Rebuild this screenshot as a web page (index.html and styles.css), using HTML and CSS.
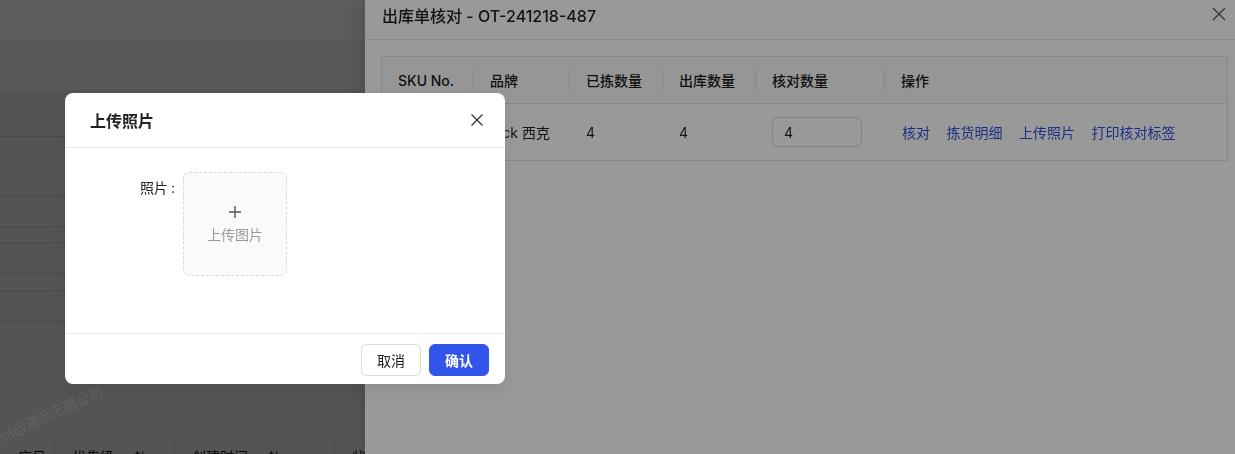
FILE: index.html
```html
<!DOCTYPE html>
<html lang="zh-CN">
<head>
    <meta charset="UTF-8">
    <title>出库单核对</title>
    <link rel="stylesheet" href="styles.css">
</head>
<body>
    <div class="page">
        <div class="topbar"></div>
        <div class="toolbar"></div>
        <div class="list">
            <div class="row" style="height: 47px"></div>
            <div class="row" style="height: 59px"></div>
            <div class="row" style="height: 31px"></div>
            <div class="row" style="height: 16px"></div>
            <div class="row" style="height: 31px"></div>
            <div class="row" style="height: 17px"></div>
            <div class="row" style="height: 31px"></div>
            <div class="gap"></div>
            <div class="list-head">
                <div class="lh-cell">序号 <span class="sort">⇅</span></div>
                <div class="lh-cell">优先级 <span class="sort">⇅</span></div>
                <div class="lh-cell">创建时间 <span class="sort">⇅</span></div>
                <div class="lh-cell">状态</div>
            </div>
        </div>
    </div>

    <div class="mask"></div>

    <aside class="drawer">
        <div class="drawer-header">
            <div class="drawer-title">出库单核对 - OT-241218-487</div>
            <svg class="drawer-close" width="14" height="14" viewBox="0 0 14 14">
                <path d="M1 1L13 13M13 1L1 13" stroke="#555" stroke-width="1.3" fill="none"/>
            </svg>
        </div>
        <div class="drawer-body">
            <div class="check-table">
                <div class="th">SKU No.</div>
                <div class="th divided">品牌</div>
                <div class="th divided">已拣数量</div>
                <div class="th divided">出库数量</div>
                <div class="th divided">核对数量</div>
                <div class="th divided">操作</div>

                <div class="td">SK-20931</div>
                <div class="td">Sick 西克</div>
                <div class="td">4</div>
                <div class="td">4</div>
                <div class="td"><input class="qty-input" value="4"></div>
                <div class="td actions">
                    <a href="#">核对</a>
                    <a href="#">拣货明细</a>
                    <a href="#">上传照片</a>
                    <a href="#">打印核对标签</a>
                </div>
            </div>
        </div>
    </aside>

    <div class="watermark">Robot@演示无限公司</div>

    <div class="mask"></div>

    <div class="modal">
        <div class="modal-header">
            <div class="modal-title">上传照片</div>
            <svg class="modal-close" width="12" height="12" viewBox="0 0 12 12">
                <path d="M0.5 0.5L11.5 11.5M11.5 0.5L0.5 11.5" stroke="#333" stroke-width="1.3" fill="none"/>
            </svg>
        </div>
        <div class="modal-body">
            <div class="form-item">
                <label class="form-label">照片<span class="colon">:</span></label>
                <div class="upload-box">
                    <svg width="12" height="12" viewBox="0 0 12 12">
                        <path d="M6 0V12M0 6H12" stroke="#555" stroke-width="1.4" fill="none"/>
                    </svg>
                    <div class="upload-text">上传图片</div>
                </div>
            </div>
        </div>
        <div class="modal-footer">
            <button class="btn">取消</button>
            <button class="btn btn-primary">确认</button>
        </div>
    </div>
</body>
</html>
```

FILE: styles.css
```css
* {
    box-sizing: border-box;
}

body {
    margin: 0;
    font-family: Inter, "Noto Sans CJK SC", sans-serif;
    font-size: 14px;
    color: rgba(0, 0, 0, 0.88);
    background: #fff;
    overflow: hidden;
}

/* page underneath */
.page {
    width: 1235px;
    height: 454px;
    overflow: hidden;
}

.topbar {
    height: 40px;
    background: #fff;
}

.toolbar {
    height: 50px;
    background: #f7f7f7;
}

.list {
    background: #ececec;
    height: 364px;
}

.row {
    border-bottom: 1px solid #cdcdcd;
}

.gap {
    height: 105px;
}

.list-head {
    display: grid;
    grid-template-columns: 54px 120px 160px 200px;
    padding-top: 19px;
}

.lh-cell {
    position: relative;
    padding-left: 18px;
    line-height: 22px;
    color: #111;
}

.lh-cell + .lh-cell::before {
    content: "";
    position: absolute;
    left: 0;
    top: -4px;
    height: 22px;
    width: 1px;
    background: #cdcdcd;
}

.sort {
    margin-left: 16px;
    font-size: 12px;
}

.mask {
    position: fixed;
    inset: 0;
    background: rgba(0, 0, 0, 0.4);
}

/* drawer */
.drawer {
    position: fixed;
    top: 0;
    right: 0;
    bottom: 0;
    width: 870px;
    background: #fff;
    box-shadow: -6px 0 16px rgba(0, 0, 0, 0.1);
}

.drawer-header {
    height: 40px;
    border-bottom: 1px solid #e6e6e6;
    display: flex;
    justify-content: space-between;
    padding: 4px 9px 0 17px;
}

.drawer-title {
    font-size: 16px;
    line-height: 24px;
    font-weight: 500;
}

.drawer-close {
    margin-top: 3px;
}

.drawer-body {
    padding: 16px 7px 0 16px;
}

.check-table {
    display: grid;
    grid-template-columns: 91px 96px 93px 93px 129px 1fr;
    border: 1px solid #e3e3e3;
}

.th {
    position: relative;
    height: 47px;
    background: #fafafa;
    border-bottom: 1px solid #e3e3e3;
    padding-left: 17px;
    display: flex;
    align-items: center;
    font-weight: 500;
    color: #1a1a1a;
}

.th:first-child {
    padding-left: 16px;
}

.th.divided::before {
    content: "";
    position: absolute;
    left: 0;
    top: 12px;
    height: 22px;
    width: 1px;
    background: #e3e3e3;
}

.td {
    height: 56px;
    padding-left: 17px;
    display: flex;
    align-items: center;
}

.qty-input {
    width: 90px;
    height: 30px;
    border: 1px solid #d9d9d9;
    border-radius: 6px;
    padding: 0 11px;
    font: inherit;
    color: inherit;
}

.actions {
    gap: 16.5px;
    padding-left: 18px;
}

.actions a {
    color: #2f4fe0;
    text-decoration: none;
}

.watermark {
    position: fixed;
    left: -19px;
    top: 438px;
    font-size: 14px;
    line-height: 16px;
    color: rgba(255, 255, 255, 0.18);
    transform: rotate(-24deg);
    transform-origin: left bottom;
    white-space: nowrap;
}

/* modal */
.modal {
    position: fixed;
    left: 65px;
    top: 93px;
    width: 440px;
    background: #fff;
    border-radius: 8px;
    box-shadow: 0 6px 16px rgba(0, 0, 0, 0.08);
}

.modal-header {
    height: 55px;
    padding: 0 22px 0 25px;
    border-bottom: 1px solid #ececec;
    display: flex;
    align-items: center;
    justify-content: space-between;
}

.modal-title {
    font-size: 16px;
    font-weight: 600;
    color: #222;
}

.modal-body {
    height: 185px;
    padding: 24px 24px 0;
}

.form-item {
    display: flex;
    align-items: flex-start;
}

.form-label {
    width: 94px;
    line-height: 32px;
    text-align: right;
    padding-right: 8px;
    color: #222;
}

.colon {
    margin-left: 3px;
}

.upload-box {
    width: 104px;
    height: 104px;
    border: 1px dashed #d9d9d9;
    border-radius: 6px;
    background: #fafafa;
    display: flex;
    flex-direction: column;
    align-items: center;
    justify-content: center;
    gap: 9px;
}

.upload-text {
    color: #999;
    line-height: 16px;
}

.modal-footer {
    border-top: 1px solid #ececec;
    height: 51px;
    padding: 10px 16px 0;
    display: flex;
    justify-content: flex-end;
    align-items: flex-start;
    gap: 8px;
}

.btn {
    width: 60px;
    height: 32px;
    border: 1px solid #d9d9d9;
    border-radius: 6px;
    background: #fff;
    font: inherit;
    color: #222;
}

.btn-primary {
    background: #3354ea;
    border-color: #3354ea;
    color: #fff;
    font-weight: 600;
}
```
